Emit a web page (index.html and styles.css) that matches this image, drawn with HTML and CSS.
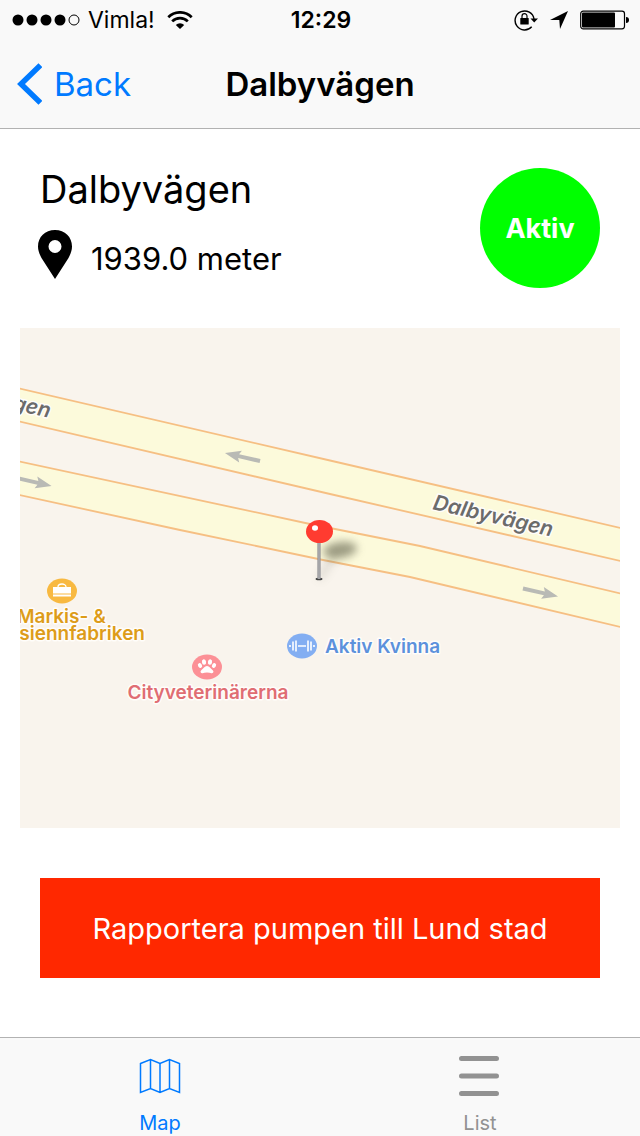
FILE: index.html
```html
<!DOCTYPE html>
<html lang="sv">
<head>
<meta charset="utf-8">
<meta name="viewport" content="width=device-width, initial-scale=1">
<title>Dalbyvägen</title>
<link rel="stylesheet" href="styles.css">
</head>
<body>
<header class="header">
  <div class="status">
    <div class="status-left">
      <svg class="signal" width="68" height="12" viewBox="0 0 68 12" aria-hidden="true">
        <circle cx="6" cy="6" r="5.5"/><circle cx="20" cy="6" r="5.5"/><circle cx="34" cy="6" r="5.5"/><circle cx="48" cy="6" r="5.5"/>
        <circle cx="62" cy="6" r="5" fill="none" stroke="#000"/>
      </svg>
      <span class="carrier">Vimla!</span>
      <svg class="wifi" width="26" height="18" viewBox="0 0 26 18" fill="none" stroke="#000" stroke-width="2.7" aria-hidden="true">
        <path d="M1.3 6.2a16.5 16.5 0 0 1 23.4 0M5.2 10.4a11 11 0 0 1 15.6 0"/>
        <path d="M8.8 13.9a6 6 0 0 1 8.4 0L13 18z" fill="#000" stroke="none"/>
      </svg>
    </div>
    <time class="clock">12:29</time>
    <div class="status-right">
      <svg width="24" height="22" viewBox="0 0 24 22" aria-hidden="true">
        <path d="M17.7 17.8A9.5 9.5 0 1 1 20 10" fill="none" stroke="#000" stroke-width="1.4"/>
        <path d="M16.5 9.5H24l-3.8 4z"/>
        <rect x="6.3" y="9" width="8.4" height="6.4" rx=".5"/>
        <path d="M8 9V7.2a2.5 2.5 0 0 1 5 0V9" fill="none" stroke="#000" stroke-width="1.2"/>
      </svg>
      <svg width="18" height="18" viewBox="0 0 18 18" aria-hidden="true"><path d="M18 0 10 18 9.3 9H0z"/></svg>
      <svg width="50" height="20" viewBox="0 0 50 20" aria-hidden="true">
        <rect x=".7" y="1.2" width="43.8" height="17.6" rx="2.5" fill="none" stroke="#000" stroke-width="1.2"/>
        <rect x="2" y="2.5" width="33" height="15" rx="1"/>
        <path d="M46 7c2 0 3 1 3 3s-1 3-3 3z"/>
      </svg>
    </div>
  </div>
  <nav class="navbar">
    <button class="back" type="button">
      <svg width="26" height="42" viewBox="0 0 26 42" aria-hidden="true"><path d="M24.400 2.200 5 21l19.400 18.800" fill="none" stroke="currentColor" stroke-width="5.500"/></svg>
      <span>Back</span>
    </button>
    <h1 class="title">Dalbyvägen</h1>
  </nav>
</header>

<main class="content">
  <section class="summary">
    <div class="place">
      <h2 class="name">Dalbyvägen</h2>
      <p class="distance">
        <svg width="34" height="49" viewBox="0 0 34 49" aria-hidden="true"><path fill-rule="evenodd" d="M17 0C7 0 0 7 0 16.500c0 4 1.500 7.500 3.500 11.500L17 49l13.500-21C32.500 24 34 20.500 34 16.500 34 7 27 0 17 0zm0 10a6.500 6.500 0 1 1 0 13 6.500 6.500 0 0 1 0-13z"/></svg>
        <span class="meters">1939.0 meter</span>
      </p>
    </div>
    <div class="badge">Aktiv</div>
  </section>

  <svg class="map" viewBox="0 0 600 500" role="img" aria-label="Karta över Dalbyvägen">
    <defs>
      <filter id="soft" x="-50%" y="-80%" width="200%" height="260%"><feGaussianBlur stdDeviation="4"/></filter>
    </defs>
    <rect width="600" height="500" fill="#f9f4ed"/>
    <g fill="#fcfadb" stroke="#f6bf83" stroke-width="1.800">
      <path d="M-5 59.500 310 132.500 605 201v33L310 166-5 92.500z"/>
      <path d="M-5 132.500 290 196l30 6 80 16 205 48.500v33.500L390 249l-87-17L160 202-5 166z"/>
    </g>
    <g fill="#b9bab5">
      <path d="M-18-2H4L2-6 18 0 2 6 4 2H-18z" transform="translate(520.500 264.500) rotate(13)"/>
      <path d="M-18-2H4L2-6 18 0 2 6 4 2H-18z" transform="translate(222.500 129) rotate(193)"/>
      <path d="M-18-2H4L2-6 18 0 2 6 4 2H-18z" transform="translate(14 154) rotate(13)"/>
    </g>
    <g class="map-label road">
      <text transform="translate(412 181) rotate(13)">Dalbyvägen</text>
      <text transform="translate(29 90) rotate(13)" text-anchor="end">Dalbyvägen</text>
    </g>
    <g transform="translate(299 251)">
      <path d="M0 0 18-27" stroke="#776" stroke-width="5" opacity=".25" filter="url(#soft)"/>
      <ellipse cx="21" cy="-29" rx="17" ry="8" fill="#6c6c55" opacity=".65" transform="rotate(-8 21 -29)" filter="url(#soft)"/>
      <ellipse cx="0" cy="0" rx="3.500" ry="1.300" fill="#444"/>
      <path d="M0-38V0" stroke="#8e8e92" stroke-width="3.200"/>
      <path d="M0-38V0" stroke="#b4b4b8" stroke-width="1.200"/>
      <ellipse cx="0.500" cy="-47.500" rx="13.500" ry="11.500" fill="#ff3b30"/>
      <ellipse cx="-4" cy="-51" rx="3" ry="2.700" fill="#fff"/>
    </g>
    <g transform="translate(42 263)">
      <ellipse rx="15" ry="12.500" fill="#f8b941"/>
      <path d="M-9-4H9V2.500H-9zM-9 3.500H9V5.500H-9z" fill="#fff"/>
      <path d="M-4-4c0-4 8-4 8 0" fill="none" stroke="#fff" stroke-width="1.300"/>
    </g>
    <g class="map-label shop">
      <text x="-3" y="295">Markis- &amp;</text>
      <text x="125" y="312" text-anchor="end">Persiennfabriken</text>
    </g>
    <g transform="translate(187 339)">
      <ellipse rx="15" ry="12.500" fill="#fc9096"/>
      <g fill="#fff">
        <ellipse cx="-7" cy="-1.500" rx="2" ry="2.600" transform="rotate(-25 -7 -1.500)"/>
        <ellipse cx="-3" cy="-5" rx="2.100" ry="2.800" transform="rotate(-8 -3 -5)"/>
        <ellipse cx="3" cy="-5" rx="2.100" ry="2.800" transform="rotate(8 3 -5)"/>
        <ellipse cx="7" cy="-1.500" rx="2" ry="2.600" transform="rotate(25 7 -1.500)"/>
        <path d="M0-1c2.500 0 3.500 2.500 5.500 4 2.500 2.500-.5 4-3 2.800q-2.500-.8-5 0C-5 7-8 5.500-5.500 3-3.500 1.500-2.500-1 0-1z"/>
      </g>
    </g>
    <text class="map-label vet" x="188" y="371" text-anchor="middle">Cityveterinärerna</text>
    <g transform="translate(282 318)">
      <ellipse rx="15" ry="12.500" fill="#83aef2"/>
      <path d="M-4 0H4M-6-5.500V5.500M6-5.500V5.500M-9-4.500V4.500M9-4.500V4.500M-12-1V1M12-1V1" fill="none" stroke="#fff" stroke-width="1.600"/>
    </g>
    <text class="map-label gym" x="305" y="325">Aktiv Kvinna</text>
  </svg>

  <button class="report" type="button">Rapportera pumpen till Lund stad</button>
</main>

<nav class="tabs">
  <a class="tab active" href="#map" aria-current="page">
    <svg width="42" height="42" viewBox="0 0 42 42" fill="none" stroke="currentColor" stroke-width="1.500" aria-hidden="true"><path d="M1.500 8.500 11.500 4.500 21 8.500 30.500 4.500 40.500 8.500V37.500L30.500 33.500 21 37.500 11.500 33.500 1.500 37.500zM11.500 4.500V33.500M21 8.500V37.500M30.500 4.500V33.500"/></svg>
    <span>Map</span>
  </a>
  <a class="tab" href="#list">
    <svg width="42" height="42" viewBox="0 0 42 42" fill="none" stroke="currentColor" stroke-width="5" stroke-linecap="round" aria-hidden="true"><path d="M2.500 3.500H37.500M2.500 21H37.500M2.500 38.500H37.500"/></svg>
    <span>List</span>
  </a>
</nav>
</body>
</html>
```
FILE: styles.css
```css
* { box-sizing: border-box; }

body {
  margin: 0;
  min-height: 100vh;
  display: flex;
  flex-direction: column;
  background: #fff;
  color: #000;
  font-family: Inter, "Liberation Sans", sans-serif;
}

svg { display: block; flex: none; }

h1, h2, p { margin: 0; }

button {
  border: 0;
  padding: 0;
  background: none;
  font: inherit;
  cursor: pointer;
}

.header {
  background: #f9f9f9;
  border-bottom: 1px solid #b2b2b2;
}

.status {
  display: grid;
  grid-template-columns: 1fr auto 1fr;
  align-items: center;
  height: 40px;
  padding: 0 10px 0 12px;
  font-size: 23px;
  line-height: 40px;
}

.status-left,
.status-right {
  display: flex;
  align-items: center;
}

.carrier { margin: 0 12px 0 8px; }

.status-right {
  justify-content: flex-end;
  gap: 12px;
}

.clock { font-weight: 600; }

.navbar {
  display: grid;
  grid-template-columns: 1fr auto 1fr;
  align-items: center;
  height: 88px;
  padding: 0 16px;
}

.back {
  display: flex;
  align-items: center;
  justify-self: start;
  gap: 12px;
  color: #007aff;
  font-size: 33px;
}

.title {
  font-size: 33px;
  font-weight: 600;
}

.content {
  flex: 1;
  display: flex;
  flex-direction: column;
  padding: 39px 20px 59px;
}

.summary {
  display: flex;
  justify-content: space-between;
  align-items: flex-start;
  padding: 0 20px;
}

.name {
  font-size: 38px;
  font-weight: 400;
  line-height: 42px;
}

.distance {
  display: flex;
  align-items: center;
  gap: 19px;
  margin: 20px 0 0 -2px;
  font-size: 31px;
}

.meters { padding-top: 8px; }

.badge {
  display: grid;
  place-items: center;
  width: 120px;
  height: 120px;
  border-radius: 50%;
  background: #0f0;
  color: #fff;
  font-size: 27px;
  font-weight: 700;
}

.map {
  width: 100%;
  margin-top: 40px;
}

.map-label {
  font-size: 19px;
  font-weight: 600;
  paint-order: stroke;
  stroke: #fffdfa;
  stroke-width: 3px;
  stroke-linejoin: round;
}

.road {
  fill: #6b6b6b;
  font-size: 21px;
  font-style: italic;
}

.shop { fill: #dd9c19; }
.vet { fill: #e06d73; }
.gym { fill: #5c91dc; }

.report {
  height: 100px;
  margin: 50px 20px 0;
  background: #ff2800;
  color: #fff;
  font-size: 29px;
}

.tabs {
  display: grid;
  grid-template-columns: 1fr 1fr;
  background: #f9f9f9;
  border-top: 1px solid #b2b2b2;
}

.tab {
  display: flex;
  flex-direction: column;
  align-items: center;
  gap: 14px;
  padding: 17px 0 2px;
  color: #929292;
  font-size: 20px;
  line-height: 24px;
  text-decoration: none;
}

.active { color: #007aff; }
```
